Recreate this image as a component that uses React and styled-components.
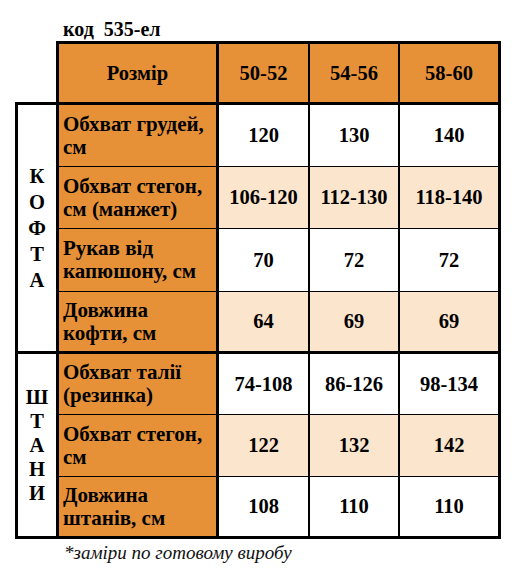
import React from 'react';
import styled, { createGlobalStyle, css } from 'styled-components';

const GlobalStyle = createGlobalStyle`
    body {
        margin: 0;
        background: #ffffff;
    }
`;

const serif = css`
    font-family: "Liberation Serif", "Times New Roman", serif;
    color: #000000;
`;

const sizes = ['50-52', '54-56', '58-60'];

const sections = [
    {
        name: 'КОФТА',
        spacing: 26,
        rows: [
            { label: ['Обхват грудей,', 'см'], values: ['120', '130', '140'] },
            { label: ['Обхват стегон,', 'см (манжет)'], values: ['106-120', '112-130', '118-140'] },
            { label: ['Рукав від', 'капюшону, см'], values: ['70', '72', '72'] },
            { label: ['Довжина', 'кофти, см'], values: ['64', '69', '69'] },
        ],
    },
    {
        name: 'ШТАНИ',
        spacing: 24,
        rows: [
            { label: ['Обхват талії', '(резинка)'], values: ['74-108', '86-126', '98-134'] },
            { label: ['Обхват стегон,', 'см'], values: ['122', '132', '142'] },
            { label: ['Довжина', 'штанів, см'], values: ['108', '110', '110'] },
        ],
    },
];

const App = () => {
    let rowIndex = 0;
    return (
        <>
            <GlobalStyle />
            <Page>
                <Title>{'код  535-ел'}</Title>
                <Grid>
                    <Corner />
                    <HeadCell $first>Розмір</HeadCell>
                    {sizes.map((s, i) => (
                        <HeadCell key={s} $last={i === sizes.length - 1}>
                            {s}
                        </HeadCell>
                    ))}
                    {sections.map((sec) => {
                        const start = rowIndex + 2;
                        rowIndex += sec.rows.length;
                        return (
                            <React.Fragment key={sec.name}>
                                <SectionCell
                                    style={{ gridRow: `${start} / span ${sec.rows.length}` }}
                                >
                                    <Letters $spacing={sec.spacing}>
                                        {sec.name.split('').map((l, i) => (
                                            <Letter key={i}>{l}</Letter>
                                        ))}
                                    </Letters>
                                </SectionCell>
                                {sec.rows.map((r, ri) => {
                                    const end = ri === sec.rows.length - 1;
                                    return (
                                        <React.Fragment key={ri}>
                                            <LabelCell $end={end}>
                                                {r.label.map((t) => (
                                                    <LabelLine key={t}>{t}</LabelLine>
                                                ))}
                                            </LabelCell>
                                            {r.values.map((v, vi) => (
                                                <ValueCell
                                                    key={vi}
                                                    $end={end}
                                                    $shade={ri % 2 === 1}
                                                    $last={vi === r.values.length - 1}
                                                >
                                                    {v}
                                                </ValueCell>
                                            ))}
                                        </React.Fragment>
                                    );
                                })}
                            </React.Fragment>
                        );
                    })}
                </Grid>
                <Note>*заміри по готовому виробу</Note>
            </Page>
        </>
    );
};

export default App;

const Page = styled.div`
    ${serif}
    padding: 18px 0 0 15px;
`;

const Title = styled.div`
    ${serif}
    margin-left: 48px;
    height: 23px;
    font-size: 20px;
    line-height: 23px;
    font-weight: bold;
    white-space: pre;
`;

const Grid = styled.div`
    display: grid;
    grid-template-columns: 44px 160px 91px 90px 101px;
    grid-template-rows: 64px 62px 62px 63px 62px 61px 62px 62px;
    width: max-content;

    & > * {
        box-sizing: border-box;
    }
`;

const Corner = styled.div`
    border-right: 3px solid #000;
    border-bottom: 3px solid #000;
`;

const HeadCell = styled.div`
    ${serif}
    display: flex;
    align-items: center;
    justify-content: center;
    background: #e69138;
    border-top: 3px solid #000;
    border-bottom: 3px solid #000;
    border-right: ${(p) => (p.$first || p.$last ? '3px' : '2px')} solid #000;
    font-size: 20.5px;
    font-weight: bold;
`;

const SectionCell = styled.div`
    grid-column: 1;
    display: flex;
    align-items: center;
    justify-content: center;
    border-left: 3px solid #000;
    border-right: 3px solid #000;
    border-bottom: 3px solid #000;
    background: #ffffff;
`;

const Letters = styled.div`
    display: flex;
    flex-direction: column;
    align-items: center;
    line-height: ${(p) => p.$spacing}px;
`;

const Letter = styled.span`
    ${serif}
    font-size: 20.5px;
    font-weight: bold;
`;

const LabelCell = styled.div`
    display: flex;
    flex-direction: column;
    justify-content: center;
    padding-left: 4px;
    background: #e69138;
    border-right: 3px solid #000;
    border-bottom: ${(p) => (p.$end ? '3px' : '1px')} solid #000;
`;

const LabelLine = styled.span`
    ${serif}
    font-size: 21px;
    line-height: 23px;
    font-weight: bold;
    white-space: nowrap;
`;

const ValueCell = styled.div`
    ${serif}
    display: flex;
    align-items: center;
    justify-content: center;
    background: ${(p) => (p.$shade ? '#fce5cd' : '#ffffff')};
    border-right: ${(p) => (p.$last ? '3px' : '2px')} solid #000;
    border-bottom: ${(p) => (p.$end ? '3px' : '1px')} solid #000;
    font-size: 20.5px;
    font-weight: bold;
`;

const Note = styled.div`
    ${serif}
    margin: 3px 0 0 49px;
    font-size: 19px;
    font-style: italic;
    line-height: 22px;
    color: #111;
`;
